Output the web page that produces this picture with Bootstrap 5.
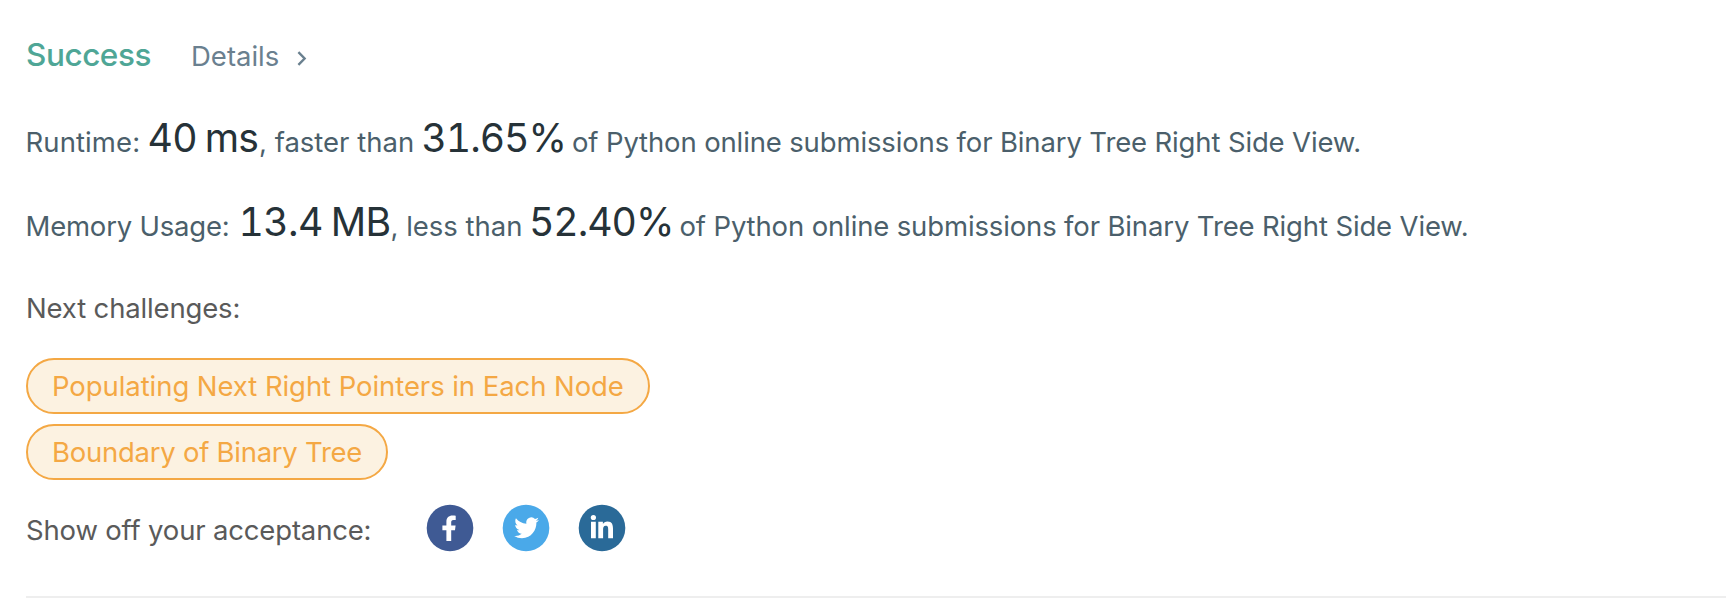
<!DOCTYPE html>
<html lang="en">
<head>
<meta charset="utf-8">
<title>Submission result</title>
<link href="https://cdn.jsdelivr.net/npm/bootstrap@5.3.0/dist/css/bootstrap.min.css" rel="stylesheet">
<style>
body{font:27.5px/40px Inter,sans-serif;color:#5a5a5a;background:#fff}
.result{padding:33px 8px 0 26px}
.head-row{line-height:44px;height:44px}
.ok{font-size:31.5px;font-weight:500;color:#4fa696;letter-spacing:-.45px;width:165px}
.details{color:#6a808f}
.chev{margin:0 0 1px 17.5px}
.stat{display:grid;line-height:44px;height:44px;white-space:nowrap;color:#4b5f6b;align-items:baseline;margin-left:-.5px}
.stat b{font-size:39.2px;font-weight:400;color:#263238;font-variant-numeric:tabular-nums}
.runtime{margin-top:39px;grid-template-columns:122px 111.5px 162.5px 150.5px auto}
.memory{margin-top:40px;grid-template-columns:213px 152px 138.5px 150.5px auto}
.percent{letter-spacing:-1.05px}
.tail{letter-spacing:-.14px}
.next{margin-top:44px;letter-spacing:-.16px}
.pill{height:56px;line-height:52px;border:2px solid #f4a844;background:#fcf2e1;color:#f4a844;padding:0 24px;white-space:nowrap}
.share{margin-top:24px;height:48px}
.share svg{width:48px;height:48px;display:block}
.rule{height:2px;background:#eee;margin-top:44px}
</style>
</head>
<body>
<main class="result">
  <div class="head-row d-flex align-items-baseline">
    <span class="ok">Success</span>
    <a class="details text-decoration-none" href="#">Details<svg class="chev" width="10" height="15" viewBox="0 0 10 15" fill="none" stroke="#6a808f" stroke-width="2.4"><path d="M1.4 1.2 7.6 7.5 1.4 13.8"/></svg></a>
  </div>
  <div class="stat runtime">
    <span style="letter-spacing:.1px">Runtime:</span><b style="letter-spacing:-.7px;word-spacing:-2px">40 ms</b><span>, faster than</span><b class="percent">31.65%</b><span class="tail">of Python online submissions for Binary Tree Right Side View.</span>
  </div>
  <div class="stat memory">
    <span style="letter-spacing:-.2px">Memory Usage:</span><b style="letter-spacing:-.6px;word-spacing:-2px">13.4 MB</b><span>, less than</span><b class="percent">52.40%</b><span class="tail">of Python online submissions for Binary Tree Right Side View.</span>
  </div>
  <div class="next">Next challenges:</div>
  <div class="d-flex flex-column align-items-start" style="gap:10px;margin-top:30px">
    <span class="pill rounded-pill" style="letter-spacing:-.07px">Populating Next Right Pointers in Each Node</span>
    <span class="pill rounded-pill" style="letter-spacing:-.26px">Boundary of Binary Tree</span>
  </div>
  <div class="share d-flex">
    <span style="width:400px;margin-top:6px;letter-spacing:-.17px">Show off your acceptance:</span>
    <div class="d-flex" style="gap:28px">
      <svg viewBox="0 0 48 48"><circle cx="24" cy="24" r="23.3" fill="#3f5a94"/><path fill="#fff" d="M20.4 37V26.2H16.4v-4.600h4v-3.700c0-4.200 2.400-6.300 6.100-6.300 1.200 0 2.400.1 3.200.2v4.200h-2.200c-1.900 0-2.300 1-2.300 2.300v3.300h4.400l-.6 4.600h-3.800V37z"/></svg>
      <svg viewBox="0 0 48 48"><circle cx="24" cy="24" r="23.3" fill="#4aa9e9"/><path fill="#fff" transform="translate(12.2 11) scale(1.03 1.07)" d="M24 4.560c-.880.390-1.830.650-2.830.770 1.020-.610 1.800-1.570 2.160-2.720-.950.560-2 .970-3.120 1.190a4.920 4.920 0 0 0-8.380 4.480C7.740 8.080 4.120 6.120 1.700 3.150a4.930 4.930 0 0 0 1.520 6.570A4.900 4.900 0 0 1 1 9.110c-.050 2.280 1.580 4.410 3.950 4.890-.690.190-1.450.230-2.220.080a4.930 4.930 0 0 0 4.600 3.420A9.900 9.900 0 0 1 0 19.540a13.940 13.940 0 0 0 7.550 2.210c9.140 0 14.300-7.720 13.990-14.640.960-.690 1.800-1.560 2.460-2.550z"/></svg>
      <svg viewBox="0 0 48 48"><circle cx="24" cy="24" r="23.3" fill="#2a6a98"/><path fill="#fff" d="M13 17.8h4.800V34.300H13zM20.300 17.800h4.600v2.200c.8-1.500 2.400-2.600 4.600-2.600 4.600 0 5.500 3.200 5.500 7.400v9.500h-4.800v-8.600c0-2-.1-3.900-2.400-3.900s-2.700 1.800-2.700 3.800v8.700h-4.800z"/><circle cx="15.4" cy="13.5" r="2.6" fill="#fff"/></svg>
    </div>
  </div>
  <div class="rule"></div>
</main>
<script src="https://cdn.jsdelivr.net/npm/bootstrap@5.3.0/dist/js/bootstrap.bundle.min.js"></script>
</body>
</html>
